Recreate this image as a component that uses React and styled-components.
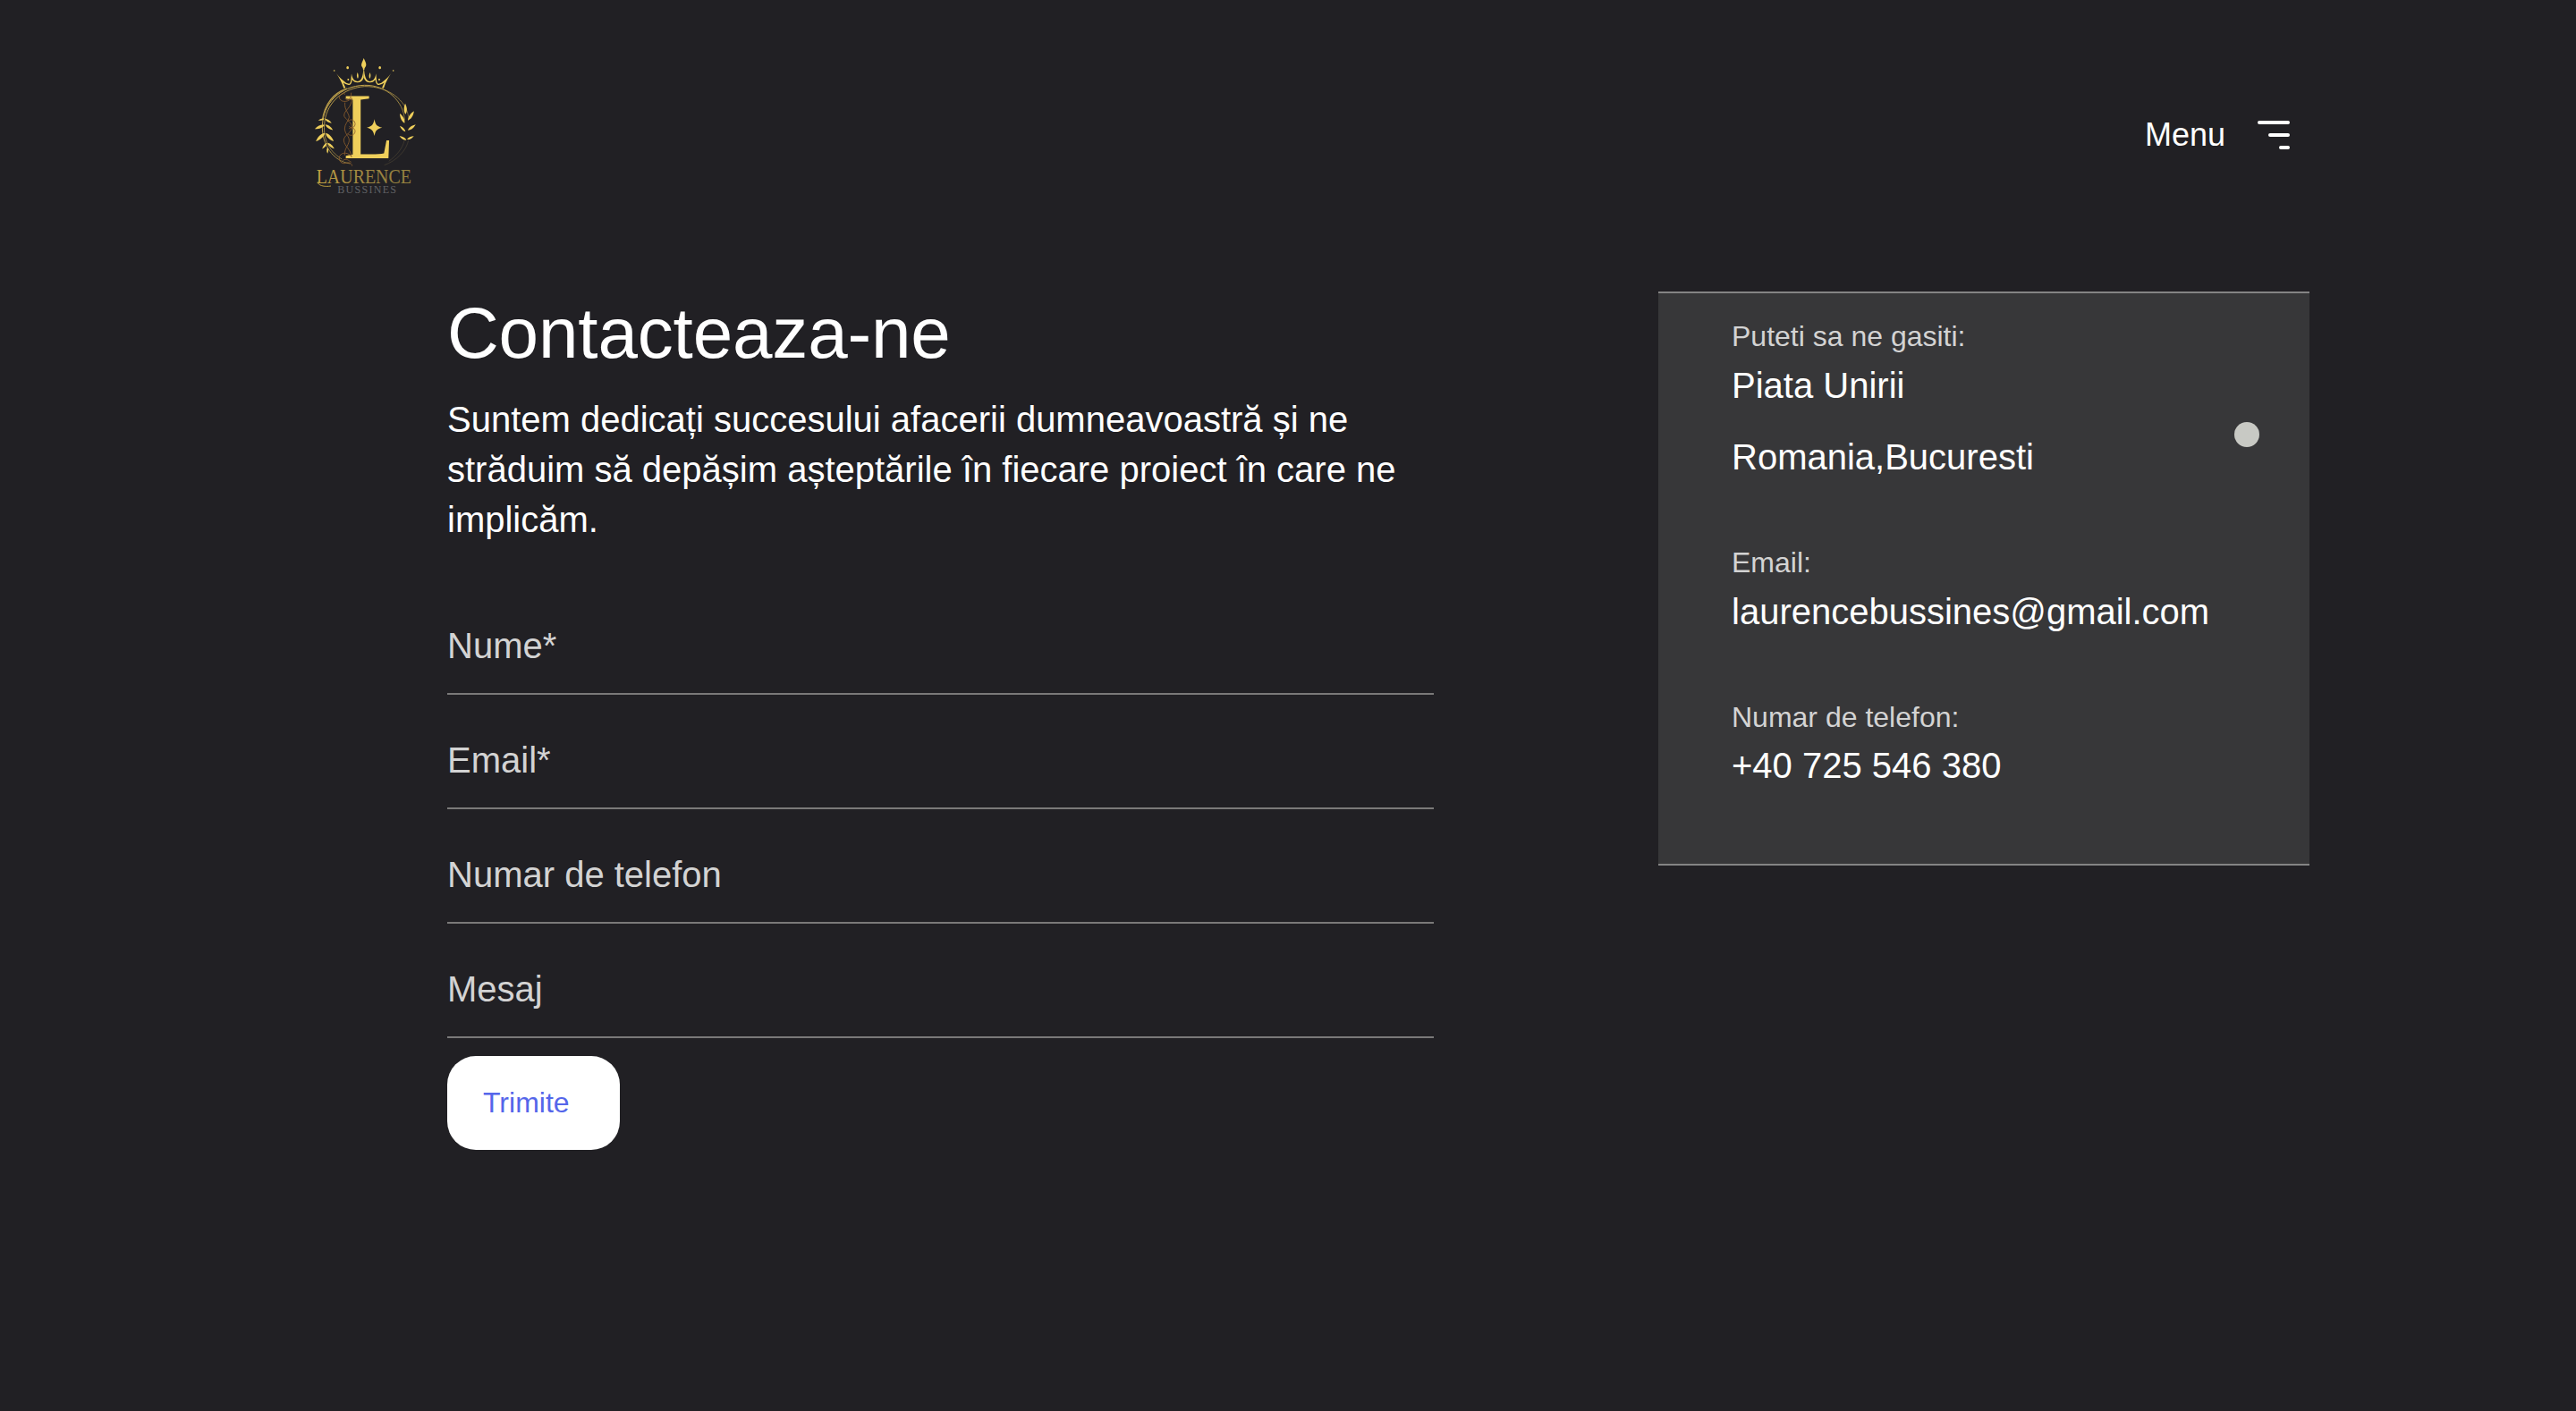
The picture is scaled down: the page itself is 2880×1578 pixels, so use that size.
import React from "react";
import styled, { createGlobalStyle } from "styled-components";

const GlobalStyle = createGlobalStyle`
  *, *::before, *::after { box-sizing: border-box; }
  body {
    margin: 0;
    background: #212024;
    color: #fff;
    font-family: "Liberation Sans", Arial, sans-serif;
  }
`;

const Page = styled.div`
  position: relative;
  min-height: 1578px;
  overflow: hidden;
`;

const Header = styled.header`
  display: flex;
  justify-content: space-between;
  align-items: flex-start;
  height: 326px;
  padding: 50px 320px 0 330px;
`;

const LogoLink = styled.a`
  display: block;
  width: 160px;
  height: 180px;
  svg { display: block; }
`;

const MenuButton = styled.button`
  display: flex;
  align-items: flex-start;
  gap: 36px;
  margin-top: 80px;
  padding: 0;
  border: 0;
  background: none;
  color: inherit;
  font: 36px/42px "Liberation Sans", Arial, sans-serif;
`;

const Bars = styled.span`
  display: flex;
  flex-direction: column;
  align-items: flex-end;
  gap: 10px;
  width: 36px;
  margin-top: 5px;
`;

const Bar = styled.span`
  width: ${({ $width }) => $width}px;
  height: 4px;
  border-radius: 2px;
  background: #fff;
`;

const Main = styled.main`
  display: flex;
  justify-content: space-between;
  align-items: flex-start;
  padding: 0 298px 0 500px;
`;

const ContactColumn = styled.section`
  width: 1103px;
`;

const Title = styled.h1`
  margin: 0;
  font-size: 80px;
  line-height: 94px;
  font-weight: 400;
  letter-spacing: -0.15px;
`;

const Intro = styled.p`
  margin: 21px 0 0;
  font-size: 40px;
  line-height: 56px;
`;

const Form = styled.form`
  display: flex;
  flex-direction: column;
  align-items: flex-start;
  margin-top: 40px;
`;

const Field = styled.input`
  display: block;
  width: 100%;
  height: 128px;
  padding: 20px 0 0;
  border: 0;
  border-bottom: 2px solid #7a7979;
  border-radius: 0;
  outline: 0;
  background: transparent;
  color: #fff;
  font: 40px/46px "Liberation Sans", Arial, sans-serif;
  &::placeholder { color: #d3d3d3; opacity: 1; }
`;

const Submit = styled.button`
  width: 193px;
  height: 105px;
  margin-top: 20px;
  padding: 0 0 2px 40px;
  border: 0;
  border-radius: 32px;
  background: #fff;
  color: #5566ea;
  text-align: left;
  font: 32px/36px "Liberation Sans", Arial, sans-serif;
`;

const InfoCard = styled.aside`
  width: 728px;
  height: 642px;
  padding: 30px 82px 0;
  border: solid #848484;
  border-width: 2px 0;
  background: #373739;
`;

const InfoGroup = styled.div`
  margin-bottom: ${({ $gap }) => $gap}px;
`;

const InfoLabel = styled.div`
  color: #d3d3d3;
  font-size: 32px;
  line-height: 36px;
`;

const InfoValue = styled.div`
  margin-top: ${({ $space }) => $space}px;
  font-size: 40px;
  line-height: 46px;
  white-space: nowrap;
`;

const CursorDot = styled.div`
  position: absolute;
  left: 2498px;
  top: 472px;
  width: 28px;
  height: 28px;
  border-radius: 50%;
  background: #c8c9c4;
`;

const LEAF = "M0 0C6 -8 8 -20 1 -36C-5 -24 -6 -9 0 0Z";

const LEFT_LEAVES = [
  [98, 248, -108, 0.6], [100, 248, 122, 0.75], [99, 269, -114, 1], [101, 268, 124, 0.88],
  [100, 296, -134, 1.15], [102, 296, 134, 1.08], [107, 329, -143, 0.74], [109, 329, 130, 0.82],
  [109, 344, 180, 0.6],
];

const RIGHT_LEAVES = [
  [370, 233, -3, 1], [367, 263, -28, 1], [378, 254, 32, 1.04], [370, 292, -46, 0.76],
  [378, 287, 52, 0.9], [373, 320, -60, 0.76], [375, 318, 62, 0.72],
];

function Leaf({ x, y, angle, scale }) {
  return <path d={LEAF} transform={`translate(${x} ${y}) rotate(${angle}) scale(${scale})`} />;
}

function CrownHalf() {
  return (
    <>
      <path d="M133 88C141 102 151 112 162 121C168 127 174 131 181 131C188 129 187 114 189 97C191 114 199 123 210 123C224 121 227 104 229 82H230V110C226 122 219 127 209 127C201 127 195 123 191 117C190 130 186 135 179 135C172 134 166 131 161 127L169 145L163 146C155 122 145 106 133 88Z" />
      <path d="M209 93C213 101 213 108 210 114C206 108 206 101 209 93Z" />
      <ellipse cx="176" cy="77" rx="4" ry="5" />
      <circle cx="131" cy="87" r="2.5" />
      <circle cx="178" cy="117" r="3" />
    </>
  );
}

function Logo() {
  return (
    <svg width="160" height="180" viewBox="0 0 480 540" role="img" aria-label="Laurence Bussines">
      <defs>
        <linearGradient id="ring" x1="0" y1="0" x2="1" y2="1">
          <stop offset="0" stopColor="#e2bd54" />
          <stop offset="0.55" stopColor="#9c8542" />
          <stop offset="1" stopColor="#4a4233" />
        </linearGradient>
        <linearGradient id="name" x1="0" y1="0" x2="1" y2="0">
          <stop offset="0" stopColor="#c2a243" />
          <stop offset="0.5" stopColor="#9d8541" />
          <stop offset="1" stopColor="#93803f" />
        </linearGradient>
      </defs>

      <g fill="none" stroke="url(#ring)">
        <path d="M185 399C125 391 90 333 91 274C92 198 151 138 232 136C307 134 365 192 367 253" strokeWidth="3" />
        <path d="M157 384C108 354 92 309 99 258C108 190 164 145 233 140C314 139 373 188 380 242" strokeWidth="2.5" />
        <path d="M91 254C100 196 130 162 174 147" strokeWidth="4" />
        <path d="M380 320C374 354 341 389 299 404M366 322C360 349 338 374 314 391" strokeWidth="2" stroke="#4a4233" />
      </g>

      <g fill="#efcf5b">
        {LEFT_LEAVES.map(([x, y, angle, scale], i) => <Leaf key={i} x={x} y={y} angle={angle} scale={scale} />)}
        {RIGHT_LEAVES.map(([x, y, angle, scale], i) => <Leaf key={i} x={x} y={y} angle={angle} scale={scale} />)}
        <path d="M230 45C233 52 239 62 238 69C236 76 232 77 232 84H228C228 77 223 75 222 69C222 62 228 52 230 45Z" />
        <CrownHalf />
        <g transform="translate(460 0) scale(-1 1)"><CrownHalf /></g>
        <path d="M266 250C269 269 274 275 292 278C274 282 269 288 266 306C262 288 257 282 240 278C257 275 262 269 266 250Z" />
      </g>

      <text
        transform="translate(162 382) scale(.88 1)"
        fontFamily='"Liberation Serif", serif'
        fontSize="316"
        fill="#efcf5b"
      >L</text>

      <g fill="none" stroke="#8a5d2c" strokeWidth="2.5">
        <path d="M188 161C188 181 178 191 167 180M190 177C180 193 157 195 149 181C146 168 158 160 168 166" />
        <path d="M190 180C190 213 165 218 164 237C165 250 190 257 190 276C189 297 163 303 163 321C164 340 188 351 189 377" />
        <path d="M167 194C164 219 181 229 181 244C178 257 166 266 166 282C168 303 182 306 181 323C178 340 165 347 166 371" />
        <path d="M177 257C188 246 201 254 201 266C201 278 188 282 181 274M177 299C186 309 201 303 201 290C200 278 186 275 180 282" />
        <path d="M189 376C181 362 157 358 149 374C144 390 157 402 170 397C180 393 190 397 191 407M160 389C171 378 180 390 188 394" />
      </g>

      <g fontFamily='"Liberation Serif", serif'>
        <text x="71" y="465" fontSize="68" fill="url(#name)" textLength="319" lengthAdjust="spacingAndGlyphs">LAURENCE</text>
        <text x="142" y="499" fontSize="36" fill="#606064" textLength="197">BUSSINES</text>
      </g>
      <path d="M76 460C75 472 98 478 120 474" fill="none" stroke="#b89b3c" strokeWidth="3" />
    </svg>
  );
}

export default function App() {
  return (
    <>
      <GlobalStyle />
      <Page>
        <Header>
          <LogoLink><Logo /></LogoLink>
          <MenuButton type="button">
            Menu
            <Bars>
              <Bar $width={36} />
              <Bar $width={24} />
              <Bar $width={12} />
            </Bars>
          </MenuButton>
        </Header>
        <Main>
          <ContactColumn>
            <Title>Contacteaza-ne</Title>
            <Intro>
              Suntem dedicați succesului afacerii dumneavoastră și ne străduim să depășim
              așteptările în fiecare proiect în care ne implicăm.
            </Intro>
            <Form>
              <Field placeholder="Nume*" />
              <Field placeholder="Email*" />
              <Field placeholder="Numar de telefon" />
              <Field placeholder="Mesaj" />
              <Submit type="button">Trimite</Submit>
            </Form>
          </ContactColumn>
          <InfoCard>
            <InfoGroup $gap={77}>
              <InfoLabel>Puteti sa ne gasiti:</InfoLabel>
              <InfoValue $space={14}>Piata Unirii</InfoValue>
              <InfoValue $space={34}>Romania,Bucuresti</InfoValue>
            </InfoGroup>
            <InfoGroup $gap={77}>
              <InfoLabel>Email:</InfoLabel>
              <InfoValue $space={14}>laurencebussines@gmail.com</InfoValue>
            </InfoGroup>
            <InfoGroup $gap={0}>
              <InfoLabel>Numar de telefon:</InfoLabel>
              <InfoValue $space={13}>+40 725 546 380</InfoValue>
            </InfoGroup>
          </InfoCard>
        </Main>
        <CursorDot />
      </Page>
    </>
  );
}
